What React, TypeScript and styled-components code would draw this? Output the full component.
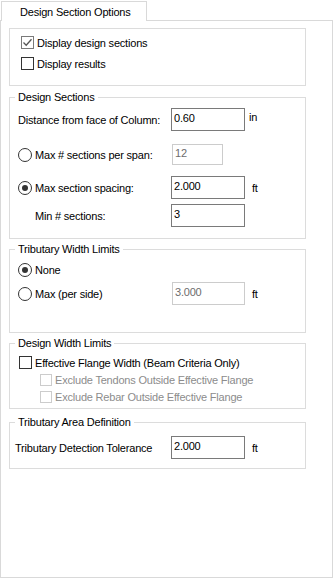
import React from 'react';
import styled, { createGlobalStyle } from 'styled-components';

const GlobalStyle = createGlobalStyle`
  html, body {
    margin: 0;
    padding: 0;
    background: #ffffff;
  }
  body {
    font-family: "Liberation Sans", Arial, sans-serif;
    font-size: 11px;
    color: #000000;
  }
`;

const Window = styled.div`
  width: 333px;
  height: 579px;
  background: #ffffff;
  letter-spacing: -0.2px;
`;

const TabStrip = styled.div`
  display: flex;
  padding: 1px 0 0 1px;
`;

const Tab = styled.div`
  position: relative;
  z-index: 1;
  box-sizing: border-box;
  width: 146px;
  height: 20px;
  margin-bottom: -1px;
  padding: 4px 0 0 18px;
  line-height: 13px;
  background: #ffffff;
  border: 1px solid #d9d9d9;
  border-bottom: none;
`;

const Page = styled.div`
  box-sizing: border-box;
  width: 333px;
  height: 558px;
  padding: 0 0 0 8px;
  border: 1px solid #d9d9d9;
  display: flex;
  flex-direction: column;
`;

const Group = styled.fieldset<{ $mt: number; $h: number }>`
  box-sizing: border-box;
  width: 297px;
  min-width: 0;
  height: ${(p) => p.$h}px;
  margin: ${(p) => p.$mt}px 0 0;
  padding: 0;
  border: 1px solid #dcdcdc;
`;

const Legend = styled.legend`
  margin-left: 5px;
  padding: 0 3px;
  line-height: 13px;
`;

const Body = styled.div<{ $pl: number }>`
  display: flex;
  flex-direction: column;
  padding-left: ${(p) => p.$pl}px;
`;

const CheckRow = styled.label<{ $mt: number; $indent?: number; $disabled?: boolean }>`
  display: flex;
  align-items: center;
  gap: 3px;
  height: 15px;
  margin: ${(p) => p.$mt}px 0 0 ${(p) => p.$indent || 0}px;
  color: ${(p) => (p.$disabled ? '#8c8c8c' : '#000000')};
  white-space: nowrap;
`;

const Box = styled.span<{ $size: number; $tone: string }>`
  box-sizing: border-box;
  display: flex;
  align-items: center;
  justify-content: center;
  width: ${(p) => p.$size}px;
  height: ${(p) => p.$size}px;
  border: 1px solid ${(p) => p.$tone};
  background: #ffffff;
  flex-shrink: 0;
`;

const RadioDot = styled.span<{ $on: boolean }>`
  box-sizing: border-box;
  display: flex;
  align-items: center;
  justify-content: center;
  width: 14px;
  height: 14px;
  border: 1px solid #333333;
  border-radius: 50%;
  flex-shrink: 0;

  &::after {
    content: '';
    display: ${(p) => (p.$on ? 'block' : 'none')};
    width: 6px;
    height: 6px;
    border-radius: 50%;
    background: #333333;
  }
`;

const FieldRow = styled.div<{ $mt: number; $label: number }>`
  display: grid;
  grid-template-columns: ${(p) => p.$label}px max-content max-content;
  justify-content: start;
  align-items: center;
  height: 23px;
  margin-top: ${(p) => p.$mt}px;
`;

const FieldLabel = styled.span<{ $indent?: number }>`
  display: flex;
  align-items: center;
  gap: 3px;
  padding-left: ${(p) => p.$indent || 0}px;
  white-space: nowrap;
`;

const TextBox = styled.input<{ $w: number; $h?: number; $off?: number }>`
  box-sizing: border-box;
  width: ${(p) => p.$w}px;
  height: ${(p) => p.$h || 23}px;
  margin: 0 0 0 ${(p) => p.$off || 0}px;
  padding: 0 2px 3px;
  font: inherit;
  letter-spacing: inherit;
  color: #000000;
  background: #ffffff;
  border: 1px solid #7a7a7a;
  border-radius: 0;
  outline: none;

  &:disabled {
    color: #6d6d6d;
    border-color: #cccccc;
    background: #ffffff;
  }
`;

const Unit = styled.span<{ $gap: number; $raise?: number }>`
  margin-left: ${(p) => p.$gap}px;
  position: relative;
  top: ${(p) => -(p.$raise || 0)}px;
`;

function CheckBox({ checked, disabled, size = 13 }: { checked?: boolean; disabled?: boolean; size?: number }) {
  const tone = disabled ? '#cccccc' : checked ? '#7a7a7a' : '#333333';
  return (
    <Box $size={size} $tone={tone}>
      {checked && (
        <svg width="11" height="11" viewBox="0 0 11 11">
          <path d="M1.5 5.5 L4.2 8.2 L9.5 2.2" fill="none" stroke="#555555" strokeWidth="1.3" />
        </svg>
      )}
    </Box>
  );
}

export default function App() {
  return (
    <Window>
      <GlobalStyle />
      <TabStrip>
        <Tab>Design Section Options</Tab>
      </TabStrip>
      <Page>
        <Group $mt={7} $h={58}>
          <Body $pl={11}>
            <CheckRow $mt={6}>
              <CheckBox checked />
              Display design sections
            </CheckRow>
            <CheckRow $mt={6}>
              <CheckBox />
              Display results
            </CheckRow>
          </Body>
        </Group>

        <Group $mt={5} $h={148}>
          <Legend>Design Sections</Legend>
          <Body $pl={8}>
            <FieldRow $mt={4} $label={153}>
              <FieldLabel>Distance from face of Column:</FieldLabel>
              <TextBox $w={74} readOnly value="0.60" />
              <Unit $gap={4} $raise={3}>in</Unit>
            </FieldRow>
            <FieldRow $mt={12} $label={153}>
              <FieldLabel>
                <RadioDot $on={false} />
                Max # sections per span:
              </FieldLabel>
              <TextBox $w={51} $h={21} $off={1} disabled value="12" />
            </FieldRow>
            <FieldRow $mt={10} $label={153}>
              <FieldLabel>
                <RadioDot $on />
                Max section spacing:
              </FieldLabel>
              <TextBox $w={74} readOnly value="2.000" />
              <Unit $gap={7}>ft</Unit>
            </FieldRow>
            <FieldRow $mt={5} $label={153}>
              <FieldLabel $indent={17}>Min # sections:</FieldLabel>
              <TextBox $w={74} readOnly value="3" />
            </FieldRow>
          </Body>
        </Group>

        <Group $mt={4} $h={90}>
          <Legend>Tributary Width Limits</Legend>
          <Body $pl={8}>
            <CheckRow $mt={6}>
              <RadioDot $on />
              None
            </CheckRow>
            <FieldRow $mt={5} $label={153}>
              <FieldLabel>
                <RadioDot $on={false} />
                Max (per side)
              </FieldLabel>
              <TextBox $w={73} $off={1} disabled value="3.000" />
              <Unit $gap={7}>ft</Unit>
            </FieldRow>
          </Body>
        </Group>

        <Group $mt={4} $h={72}>
          <Legend>Design Width Limits</Legend>
          <Body $pl={9}>
            <CheckRow $mt={5}>
              <CheckBox />
              Effective Flange Width (Beam Criteria Only)
            </CheckRow>
            <CheckRow $mt={2} $indent={21} $disabled>
              <CheckBox disabled size={12} />
              Exclude Tendons Outside Effective Flange
            </CheckRow>
            <CheckRow $mt={2} $indent={21} $disabled>
              <CheckBox disabled size={12} />
              Exclude Rebar Outside Effective Flange
            </CheckRow>
          </Body>
        </Group>

        <Group $mt={7} $h={53}>
          <Legend>Tributary Area Definition</Legend>
          <Body $pl={5}>
            <FieldRow $mt={7} $label={156}>
              <FieldLabel>Tributary Detection Tolerance</FieldLabel>
              <TextBox $w={74} readOnly value="2.000" />
              <Unit $gap={7}>ft</Unit>
            </FieldRow>
          </Body>
        </Group>
      </Page>
    </Window>
  );
}
